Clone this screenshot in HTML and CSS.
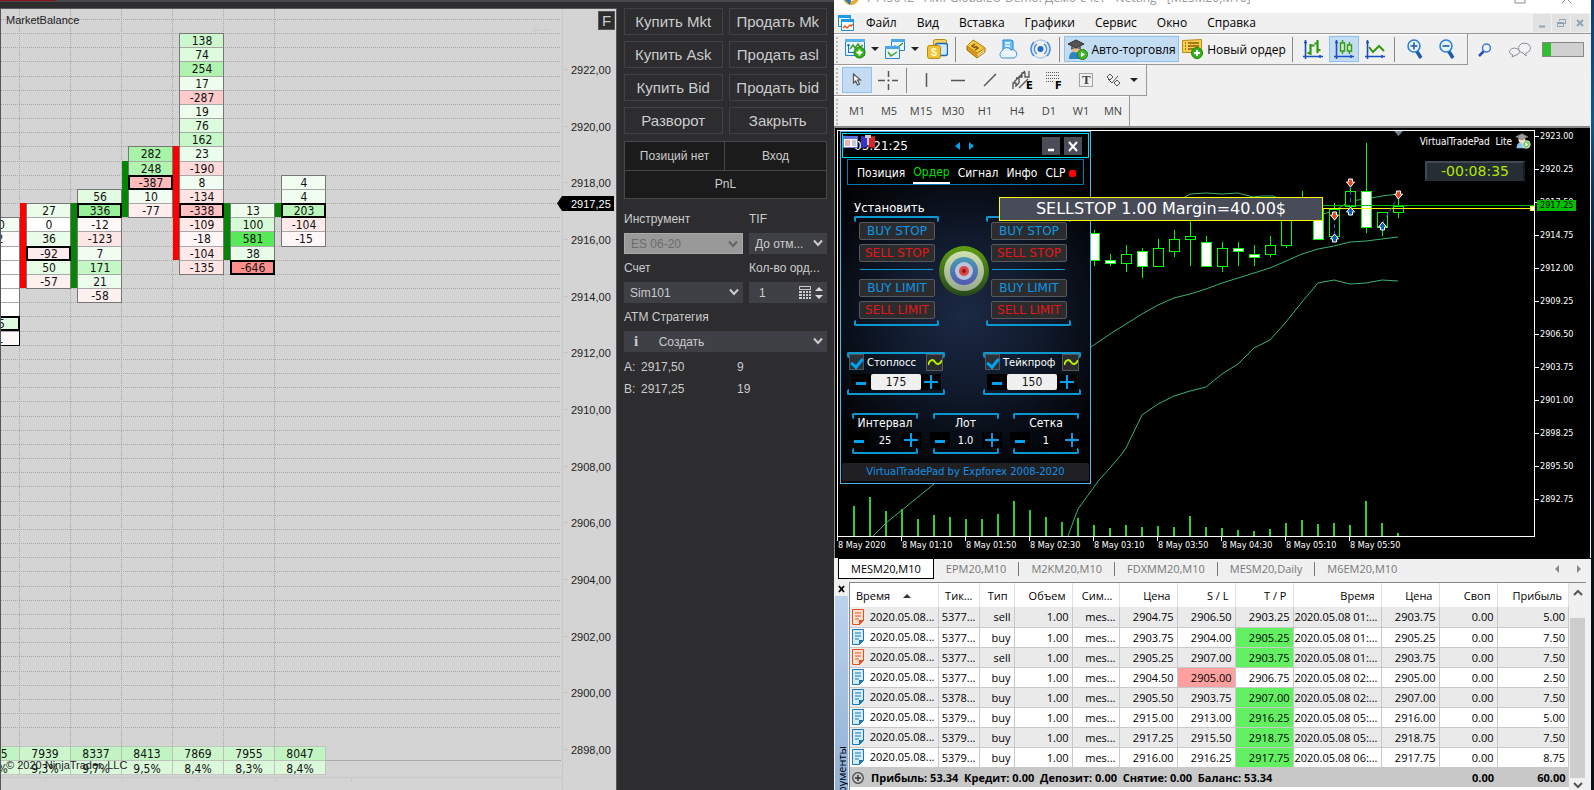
FILE: index.html
```html
<!DOCTYPE html>
<html lang="ru">
<head>
<meta charset="utf-8">
<title>MESM20,M10</title>
<link rel="stylesheet" href="styles.css">
</head>
<body>
<div class="workspace">

<section class="ninja">
  <div class="ninja-strip"><span class="ninja-strip-red"></span></div>
  <div class="ninja-main">
    <div class="foot">
      <div class="foot-plot"><svg id="footprint" class="fill"></svg>
        <span class="foot-title">MarketBalance</span>
        <span class="foot-copy">© 2020 NinjaTrader, LLC</span>
      </div>
      <div class="foot-axis"><svg id="footaxis" class="fill"></svg><button class="f-button">F</button></div>
    </div>
    <aside class="orders">
      <div class="order-buttons">
        <button>Купить Mkt</button><button>Продать Mk</button>
        <button>Купить Ask</button><button>Продать asl</button>
        <button>Купить Bid</button><button>Продать bid</button>
        <button>Разворот</button><button>Закрыть</button>
      </div>
      <div class="position">
        <div>Позиций нет</div><div>Вход</div><div class="pnl">PnL</div>
      </div>
      <div class="order-fields">
        <label for="instr">Инструмент</label><label for="tif">TIF</label>
        <div class="sel off"><select id="instr" disabled><option>ES 06-20</option></select><svg width="10" height="8" viewBox="0 0 10 8"><path d="M1 1.5 5 6 9 1.5"/></svg></div>
        <div class="sel"><select id="tif"><option>До отм...</option></select><svg width="10" height="8" viewBox="0 0 10 8"><path d="M1 1.5 5 6 9 1.5"/></svg></div>
        <label for="acc">Счет</label><label for="qty">Кол-во орд...</label>
        <div class="sel"><select id="acc"><option>Sim101</option></select><svg width="10" height="8" viewBox="0 0 10 8"><path d="M1 1.5 5 6 9 1.5"/></svg></div>
        <div class="sel qty"><input id="qty" type="text" value="1">
          <svg class="calc" width="24" height="14" viewBox="0 0 24 14"><path d="M.5 .5h11v3h-11z" fill="none" stroke="#ccc"/><path d="M0 5h3v2H0zM4 5h2v2H4zM7 5h2v2H7zM10 5h2v2h-2zM0 8h3v2H0zM4 8h2v2H4zM7 8h2v2H7zM10 8h2v2h-2zM0 11h3v2H0zM4 11h2v2H4zM7 11h2v2H7zM10 11h2v2h-2z" fill="#ccc"/><path d="M16 5l4-4 4 4zM16 9l4 4 4-4z" fill="#ddd"/></svg></div>
        <label class="wide" for="atm">ATM Стратегия</label>
        <div class="sel wide atm"><b>i</b><select id="atm"><option>Создать</option></select><svg width="10" height="8" viewBox="0 0 10 8"><path d="M1 1.5 5 6 9 1.5"/></svg></div>
      </div>
      <div class="quotes"><span>A:</span><span>2917,50</span><span>9</span><span>B:</span><span>2917,25</span><span>19</span></div>
    </aside>
  </div>
</section>

<section class="mt">
  <div class="mt-title">
    <svg width="18" height="18" viewBox="0 0 18 18"><circle cx="9" cy="9" r="8" fill="#e0b030"/><circle cx="9" cy="7" r="6" fill="#fff"/><path d="M2 11l6 6 1-5z" fill="#2d74c4"/></svg>
    <span>7445642 - AMPGlobalEU-Demo: Демо-счет - Netting - [MESM20,M10]</span>
    <svg class="winctl" width="66" height="14" viewBox="0 0 66 14"><path d="M5 3v8h10V3zM52 2l9 9M61 2l-9 9" fill="none" stroke="#888"/></svg>
  </div>
  <nav class="mt-menu">
    <svg width="18" height="18" viewBox="0 0 18 18"><path d="M1.500 1.500h12v11h-12z" fill="#fff" stroke="#1b8be0"/><path d="M1 1h13v3H1z" fill="#1b9bf0"/><path d="M4.500 5.500h12v11h-12z" fill="#fff" stroke="#1b8be0"/><path d="M4 5h13v3H4z" fill="#1b9bf0"/><path d="M6 14l2-2 2 2 3-3 1 1 2-2" fill="none" stroke="#e8541e" stroke-width="1.400"/></svg>
    <a href="#">Файл</a><a href="#">Вид</a><a href="#">Вставка</a><a href="#">Графики</a><a href="#">Сервис</a><a href="#">Окно</a><a href="#">Справка</a>
    <div class="mdi"><button aria-label="Свернуть"><svg width="12" height="12"><path d="M3 9.500h6" stroke="#8fa3b3" stroke-width="2"/></svg></button><button aria-label="Восстановить"><svg width="12" height="12"><path d="M4.500 4V2.500h6v4H9M2.500 5.500h6v4h-6zM2.500 6.500h6" fill="none" stroke="#8fa3b3"/></svg></button><button aria-label="Закрыть"><svg width="12" height="12"><path d="M3 3l6 6M9 3l-6 6" stroke="#8fa3b3" stroke-width="2"/></svg></button></div>
  </nav>

  <div class="bars-row">
    <div class="toolbar t1">
      <button class="w42" aria-label="Новый график"><svg width="21" height="20" viewBox="0 0 21 20"><path d="M.5 .5h19v16H.500z" fill="#e8f6ff" stroke="#2a83c7"/><path d="M0 0h20v3H0z" fill="#5ab4ec"/><path d="M3.500 14V5M2 7l1.500-2L5 7M3 13.500h7" fill="none" stroke="#1f6fb8"/><path d="M5 10l3-4 2 3 3-4 2 3 3-2" fill="none" stroke="#3a9a1c" stroke-width="1.400"/><circle cx="14.500" cy="13.500" r="5.500" fill="#34b21c" stroke="#1f7f10"/><path d="M14.500 10.500v6M11.500 13.500h6" stroke="#fff" stroke-width="2"/></svg><i class="caret"></i></button>
      <button class="w42" aria-label="Профили"><svg width="20" height="20" viewBox="0 0 20 20"><path d="M6.500 .5h13v11h-13z" fill="#eaf6ff" stroke="#2a83c7"/><path d="M6 0h14v3H6z" fill="#4aa6e6"/><path d="M9 7l4 1 5-4" fill="none" stroke="#3a9a1c" stroke-width="1.400"/><path d="M.5 7.500h14v12H.500z" fill="#eaf6ff" stroke="#2a83c7"/><path d="M0 7h15v3H0z" fill="#4aa6e6"/><path d="M3 13l3 4 3-2 3-2" fill="none" stroke="#3a9a1c" stroke-width="1.400"/></svg><i class="caret"></i></button>
      <button class="w30" aria-label="Символы"><svg width="21" height="20" viewBox="0 0 21 20"><rect x="6.500" y=".5" width="13" height="15" rx="2" fill="#f7d263" stroke="#b98a12"/><rect x="8.500" y="4.500" width="12" height="12" rx="2" fill="#cfe8ff" stroke="#1566c0" stroke-width="1.400"/><rect x=".5" y="6.500" width="13" height="13" rx="2" fill="#f1c12f" stroke="#b98a12"/><text x="4" y="17" class="ic-s">$</text></svg></button>
      <span class="sep"></span>
      <button class="w32" aria-label="Торговля"><svg width="22" height="20" viewBox="0 0 22 20"><path d="M8 1l12 8v4l-8 6L2 11V7z" fill="#d89a18" stroke="#9b6d08"/><path d="M8 1l12 8-8 5L2 7z" fill="#f4c840" stroke="#b98a12"/><path d="M10 5l-3 2 2 1.500 2-1 2 1.500-3 2" fill="none" stroke="#7a4e04" stroke-width="1.400"/><path d="M12.500 15.500l7-5M12.500 17.500l7-5" stroke="#fff3c0"/></svg></button>
      <button class="w32" aria-label="VPS"><svg width="20" height="20" viewBox="0 0 20 20"><path d="M5 1h8l2 1v12H5z" fill="#6cc2f7" stroke="#1788d8"/><path d="M7 4h5M7 7h5" stroke="#fff" stroke-width="1.500"/><path d="M4 19a4 4 0 0 1 0-7 5 5 0 0 1 9-1 4 4 0 0 1 3 8z" fill="#eaf5ff" stroke="#3c8fe0"/></svg></button>
      <button class="w32" aria-label="Сигналы"><svg width="21" height="20" viewBox="0 0 21 20" fill="none" stroke="#4a8ad8" stroke-width="1.300"><circle cx="10.500" cy="10" r="9" stroke="#a8c8ee"/><path d="M7 5a6 6 0 0 0 0 10M14 5a6 6 0 0 1 0 10M4 3a9.500 9.500 0 0 0 0 14M17 3a9.500 9.500 0 0 1 0 14"/><circle cx="10.500" cy="10" r="3" fill="#1f6ac8" stroke="none"/></svg></button>
      <span class="sep"></span>
      <button class="on auto"><svg width="21" height="21" viewBox="0 0 21 21"><path d="M2 20c0-6 3-8 7-8s6 2 6 8z" fill="#2f83c8"/><circle cx="9" cy="9" r="4.500" fill="#e9b98a"/><path d="M1 5l8-4 8 4-8 4z" fill="#555" stroke="#333"/><path d="M4 7v4c2-2 8-2 10 0V7l-5 3z" fill="#666"/><circle cx="15.500" cy="15.500" r="5" fill="#44b82a" stroke="#237a12"/><path d="M14 13v5l4-2.500z" fill="#fff"/></svg>Авто-торговля</button>
      <button class="neworder"><svg width="21" height="20" viewBox="0 0 21 20"><path d="M.5 1.500l19-1v13H.500z" fill="#f6cf50" stroke="#b98a12"/><path d="M3 4h1M6 4h11M3 7h1M6 7h11M3 10h1M6 10h7" stroke="#8a5c08" stroke-width="1.300"/><circle cx="15" cy="14" r="5.500" fill="#34b21c" stroke="#1f7f10"/><path d="M15 11v6M12 14h6" stroke="#fff" stroke-width="2"/></svg>Новый ордер</button>
      <span class="sep"></span>
      <button class="w32" aria-label="Бары"><svg width="20" height="20" viewBox="0 0 20 20"><path d="M2.500 1v19M0 17.500h20M1 3.500h3M17 16v3" stroke="#1a4fc0" stroke-width="1.600"/><path d="M7.500 5v11M4.500 14h3M7.500 6.500h4M14.500 1v13M11.500 4.500h3M14.500 11h3" stroke="#2f9a10" stroke-width="2.200"/></svg></button>
      <button class="w30 on" aria-label="Свечи"><svg width="20" height="20" viewBox="0 0 20 20"><path d="M2.500 1v19M0 17.500h20M1 3.500h3M17 16v3" stroke="#1a4fc0" stroke-width="1.600"/><path d="M8.500 1v14M15.500 3v12" stroke="#2f9a10" stroke-width="1.400"/><path d="M6.500 4h4v8h-4zM13.500 6h4v6h-4z" fill="#d4f0c8" stroke="#2f9a10" stroke-width="1.400"/></svg></button>
      <button class="w32" aria-label="Линия"><svg width="20" height="20" viewBox="0 0 20 20"><path d="M2.500 1v19M0 17.500h20M1 3.500h3M17 16v3" stroke="#1a4fc0" stroke-width="1.600"/><path d="M4 8l4 5 6-6 5 5" fill="none" stroke="#2f9a10" stroke-width="2"/></svg></button>
      <span class="sep"></span>
      <button class="w32" aria-label="Увеличить"><svg width="17" height="20" viewBox="0 0 17 20"><path d="M9 11l5 8" stroke="#1f58b0" stroke-width="3.500"/><circle cx="7" cy="7" r="6" fill="#e4f4ff" stroke="#2f80d0" stroke-width="1.600"/><path d="M7 3.500v7M3.500 7h7" stroke="#1f58b0" stroke-width="1.600"/></svg></button>
      <button class="w32" aria-label="Уменьшить"><svg width="17" height="20" viewBox="0 0 17 20"><path d="M9 11l5 8" stroke="#1f58b0" stroke-width="3.500"/><circle cx="7" cy="7" r="6" fill="#e4f4ff" stroke="#2f80d0" stroke-width="1.600"/><path d="M3.500 7h7" stroke="#1f58b0" stroke-width="1.600"/></svg></button>
    </div>
    <div class="tray">
      <svg width="14" height="14" viewBox="0 0 14 14"><path d="M6 8l-5 5" stroke="#2450b8" stroke-width="2.500"/><circle cx="8.500" cy="5" r="4" fill="#eef4ff" stroke="#3a78d8" stroke-width="1.500"/></svg>
      <svg width="22" height="16" viewBox="0 0 22 16" fill="#f2f2f6" stroke="#8c8c96"><path d="M14 11l3 3v-3a6 5 0 1 0-3 0z"/><path d="M4 13l-1 2 4-2a5 3.500 0 1 0-3 0z"/></svg>
      <progress max="100" value="20"></progress>
    </div>
  </div>

  <div class="toolbar t2">
    <button class="w30 on" aria-label="Курсор"><svg width="10" height="14" viewBox="0 0 10 14"><path d="M1.500 1v9l2.200-2 1.800 4 2-1-2-4h3z" fill="#fff" stroke="#555" stroke-width="1.200"/></svg></button>
    <button class="w32" aria-label="Перекрестие"><svg width="20" height="20"><path d="M10.500 1v6M10.500 9.500v2M10.500 14v6M0 10.500h7M9.500 10.500h2M14 10.500h6" stroke="#555" stroke-width="1.500"/></svg></button>
    <span class="sep"></span>
    <button class="w32" aria-label="Вертикаль"><svg width="14" height="14"><path d="M7.500 0v14" stroke="#555" stroke-width="1.500"/></svg></button>
    <button class="w32" aria-label="Горизонталь"><svg width="14" height="14"><path d="M0 7.500h14" stroke="#555" stroke-width="1.500"/></svg></button>
    <button class="w32" aria-label="Линия"><svg width="14" height="14"><path d="M1 13L13 1" stroke="#555" stroke-width="1.500"/></svg></button>
    <button class="w32" aria-label="Канал"><svg width="21" height="20"><path d="M1 19v-6h3v3l3-3V7h3V3h3v4h4V1M2 12L13 1M7 18l9-9M4 8h3" fill="none" stroke="#555" stroke-width="1.300"/><text x="14" y="19" class="ic-b">E</text></svg></button>
    <button class="w32" aria-label="Фибоначчи"><svg width="17" height="20"><path d="M0 2.500h14M0 5.500h14M0 8.500h14M0 11.500h8" stroke="#555" stroke-dasharray="1 1"/><text x="9" y="19" class="ic-b">F</text></svg></button>
    <button class="w32" aria-label="Текст"><svg width="16" height="16"><path d="M1.500 1.500h13v13h-13z" fill="none" stroke="#555" stroke-dasharray="1 1"/><text x="4" y="12" class="ic-t">T</text></svg></button>
    <button class="w42" aria-label="Фигуры"><svg width="15" height="15" fill="none" stroke="#555"><path d="M4 1l3 3-3 3-3-3zM2 6l4 4L12 3M11 7l3 3-3 3-3-3z"/></svg><i class="caret"></i></button>
  </div>
  <div class="toolbar t3">
    <button>M1</button><button>M5</button><button>M15</button><button>M30</button><button>H1</button><button>H4</button><button>D1</button><button>W1</button><button>MN</button>
  </div>

  <div class="chart">
    <div class="chart-top">
      <div class="plot">
        <svg id="candles" class="fill"></svg>
        <div class="expert">VirtualTradePad&nbsp; Lite <svg width="16" height="16" viewBox="0 0 21 21"><path d="M2 20c0-6 3-8 7-8s6 2 6 8z" fill="#8cc4ee"/><circle cx="9" cy="9" r="4.500" fill="#f3dcc4"/><path d="M1 5l8-4 8 4-8 4z" fill="#999" stroke="#777"/><circle cx="15" cy="15" r="5" fill="#7cc86c" stroke="#e8ffe8"/><path d="M13.500 12.500v5l4-2.500z" fill="#fff"/></svg></div>
        <div class="timer">-00:08:35</div>

        <div class="pad">
          <header class="pad-head">
            <svg class="pad-icons" width="34" height="14" viewBox="0 0 34 14"><path d="M.5 1.500h14v11H.500z" fill="#fff" stroke="#6a7ad8"/><path d="M0 1h15v3H0z" fill="#5a6ee0"/><path d="M2 6h5M2 8h5M2 10h5" stroke="#e06060"/><path d="M9 6h4M9 8h4M9 10h4" stroke="#9090c0"/><path d="M18 1l7 1v10l-7 1z" fill="#3434c8"/><path d="M25 2l7-1v12l-7-1z" fill="#d42828"/><path d="M22 0h6v3h-2v7h-2V3h-2z" fill="#ccc"/></svg>
            <span class="clock">05:21:25</span>
            <svg class="arrows" width="20" height="8"><path d="M5 0v8L0 4zM14 0v8l5-4z" fill="#00a2f2"/></svg>
            <button aria-label="Свернуть"><svg width="16" height="16"><path d="M5 12h6" stroke="#fff" stroke-width="2.500"/></svg></button>
            <button aria-label="Закрыть"><svg width="16" height="16"><path d="M4 4l8 9M12 4l-8 9" stroke="#fff" stroke-width="2"/></svg></button>
          </header>
          <nav class="pad-nav"><a href="#">Позиция</a><a href="#" class="cur">Ордер</a><a href="#">Сигнал</a><a href="#">Инфо</a><a href="#">CLP</a><i></i></nav>
          <h2>Установить</h2>
          <div class="pad-orders">
            <div class="frame"><button class="buy">BUY STOP</button><button class="sell">SELL STOP</button><hr><button class="buy">BUY LIMIT</button><button class="sell">SELL LIMIT</button></div>
            <svg class="target" width="50" height="50" viewBox="0 0 50 50"><defs><linearGradient id="tg" x2="0" y2="1"><stop offset="0" stop-color="#5f9e12"/><stop offset="1" stop-color="#27481a"/></linearGradient><linearGradient id="tb" x2="0" y2="1"><stop offset="0" stop-color="#4a9ab4"/><stop offset="1" stop-color="#5058b0"/></linearGradient><linearGradient id="tw" x2="0" y2="1"><stop offset="0" stop-color="#cfe0b0"/><stop offset="1" stop-color="#98a890"/></linearGradient></defs><circle cx="25" cy="25" r="25" fill="url(#tg)"/><circle cx="25" cy="25" r="20" fill="url(#tw)"/><circle cx="25" cy="25" r="14" fill="url(#tb)"/><circle cx="25" cy="25" r="9" fill="#b8c4d8"/><circle cx="25" cy="25" r="5" fill="#e04444"/><circle cx="25" cy="25" r="2" fill="#901818"/></svg>
            <div class="frame"><button class="buy">BUY STOP</button><button class="sell">SELL STOP</button><hr><button class="buy">BUY LIMIT</button><button class="sell">SELL LIMIT</button></div>
          </div>
          <div class="pad-stops">
            <div class="frame">
              <div class="stop-head"><input type="checkbox" id="sl" checked><label for="sl">Стоплосс</label><button aria-label="Кривая"><svg width="14" height="14"><path d="M0 10c2-6 5-6 7-3s5 3 7-2" fill="none" stroke="#b8f000" stroke-width="2"/></svg></button></div>
              <div class="spin"><button aria-label="Меньше"><i class="minus"></i></button><input type="text" value="175" aria-label="Стоплосс"><button aria-label="Больше"><i class="plus"></i></button></div>
            </div>
            <div class="frame">
              <div class="stop-head"><input type="checkbox" id="tp" checked><label for="tp">Тейкпроф</label><button aria-label="Кривая"><svg width="14" height="14"><path d="M0 10c2-6 5-6 7-3s5 3 7-2" fill="none" stroke="#b8f000" stroke-width="2"/></svg></button></div>
              <div class="spin"><button aria-label="Меньше"><i class="minus"></i></button><input type="text" value="150" aria-label="Тейкпроф"><button aria-label="Больше"><i class="plus"></i></button></div>
            </div>
          </div>
          <div class="pad-params">
            <div class="frame"><label for="p1">Интервал</label><div class="spin dark"><button aria-label="Меньше"><i class="minus"></i></button><input id="p1" type="text" value="25"><button aria-label="Больше"><i class="plus"></i></button></div></div>
            <div class="frame"><label for="p2">Лот</label><div class="spin dark"><button aria-label="Меньше"><i class="minus"></i></button><input id="p2" type="text" value="1.0"><button aria-label="Больше"><i class="plus"></i></button></div></div>
            <div class="frame"><label for="p3">Сетка</label><div class="spin dark"><button aria-label="Меньше"><i class="minus"></i></button><input id="p3" type="text" value="1"><button aria-label="Больше"><i class="plus"></i></button></div></div>
          </div>
          <footer>VirtualTradePad by Expforex 2008-2020</footer>
        </div>
        <div class="tip">SELLSTOP 1.00 Margin=40.00$</div>
      </div>
      <div class="price-axis"><span>2923.00</span><span>2920.25</span><span>2917.50</span><span>2914.75</span><span>2912.00</span><span>2909.25</span><span>2906.50</span><span>2903.75</span><span>2901.00</span><span>2898.25</span><span>2895.50</span><span>2892.75</span><b>2917.25</b></div>
    </div>
    <div class="time-axis"><span>8 May 2020</span><span>8 May 01:10</span><span>8 May 01:50</span><span>8 May 02:30</span><span>8 May 03:10</span><span>8 May 03:50</span><span>8 May 04:30</span><span>8 May 05:10</span><span>8 May 05:50</span></div>
  </div>

  <div class="tabs"><button class="cur">MESM20,M10</button><button>EPM20,M10</button><button>M2KM20,M10</button><button>FDXMM20,M10</button><button>MESM20,Daily</button><button>M6EM20,M10</button>
    <svg width="30" height="10"><path d="M6 1v8L2 5zM24 1v8l4-4z" fill="#888"/></svg></div>

  <div class="toolbox">
    <div class="side"><button aria-label="Закрыть"><svg width="8" height="8"><path d="M1 1l5 6M6 1L1 7" stroke="#000" stroke-width="1.800"/></svg></button><div class="side-bar"><span>Инструменты</span></div></div>
    <div class="tbl">
      <table>
        <colgroup><col class="c88"><col class="c41"><col class="c35"><col class="c58"><col class="c47"><col class="c58"><col class="c58"><col class="c58"><col class="c88"><col class="c58"><col class="c58"><col></colgroup>
        <thead><tr><th class="l">Время <i class="up"></i></th><th>Тик...</th><th>Тип</th><th>Объем</th><th>Сим...</th><th>Цена</th><th>S / L</th><th>T / P</th><th>Время</th><th>Цена</th><th>Своп</th><th>Прибыль</th></tr></thead>
        <tbody id="deals"></tbody>
        <tfoot><tr><td colspan="9" class="l"><svg width="12" height="12" viewBox="0 0 12 12"><circle cx="6" cy="6" r="5.300" fill="none" stroke="#444" stroke-width="1.200"/><path d="M6 3v6M3 6h6" stroke="#333" stroke-width="1.400"/></svg>Прибыль: 53.34&nbsp; Кредит: 0.00&nbsp; Депозит: 0.00&nbsp; Снятие: 0.00&nbsp; Баланс: 53.34</td><td></td><td>0.00</td><td>60.00</td></tr></tfoot>
      </table>
      <div class="scroll"><svg width="10" height="7"><path d="M1 6l4-4 4 4" fill="none" stroke="#555" stroke-width="2"/></svg><i></i><svg width="10" height="7"><path d="M1 1l4 4 4-4" fill="none" stroke="#555" stroke-width="2"/></svg></div>
    </div>
  </div>
</section>
<div class="desktop"></div>
</div>
<script src="app.js"></script>
</body>
</html>
```
FILE: styles.css
```css
* { box-sizing: border-box; }
body { margin: 0; background: #2d2d30; font-family: "Open Sans", sans-serif; overflow: hidden; }
button, input, select { font: inherit; color: inherit; margin: 0; padding: 0; border: 0; background: none; border-radius: 0; }
a { color: inherit; text-decoration: none; }
.fill { display: block; width: 100%; height: 100%; }
.workspace { display: flex; height: 100vh; }

/* footprint chart */
.ninja { flex: 834 1 0; min-width: 0; display: flex; flex-direction: column; background: #2d2d30; font-family: "Liberation Sans", sans-serif; }
.ninja-strip { height: 8px; border-top: 2px solid #4a4a4e; position: relative; }
.ninja-strip-red { position: absolute; top: -2px; left: 0; width: 56px; height: 1px; background: #8c1420; }
.ninja-main { flex: 1; display: flex; min-height: 0; }
.foot { flex: 1; display: flex; min-width: 0; background: #d4d4d4; border: 1px solid #55555a; border-bottom: 0; }
.foot-plot { flex: 1; min-width: 0; position: relative; }
.foot-axis { width: 54px; position: relative; border-left: 1px solid #c8c8c8; }
.foot-title { position: absolute; left: 5px; top: 5px; font-size: 11px; line-height: 13px; color: #222; }
.foot-copy { position: absolute; left: 5px; bottom: 18px; font-size: 11px; line-height: 14px; color: #222; }
.f-button { position: absolute; top: 2px; right: 1px; width: 17px; height: 19px; background: #2d2d30; color: #ccc; font-size: 15px; line-height: 17px; border: 1px solid #555; }
.cell { font: 12px "DejaVu Sans Condensed", sans-serif; text-anchor: middle; fill: #111; }
.tick { font: 11px "Liberation Sans", sans-serif; fill: #222; }
.tick.now { fill: #fff; }

/* order entry */
.orders { width: 217px; padding: 0 7px 0 7px; color: #ccc; font-size: 12px; }
.order-buttons { display: grid; grid-template-columns: 1fr 1fr; gap: 6px; }
.order-buttons button { height: 27px; border: 1px solid #414145; font-size: 15px; white-space: nowrap; overflow: hidden; }
.position { display: grid; grid-template-columns: 99px 1fr; gap: 1px; margin-top: 7px; background: #47474b; border: 1px solid #47474b; text-align: center; line-height: 28px; }
.position div { background: #1b1b1b; }
.position .pnl { grid-column: span 2; line-height: 27px; }
.order-fields { display: grid; grid-template-columns: 119px 1fr; column-gap: 6px; margin-top: 6px; }
.order-fields label { line-height: 28px; white-space: nowrap; }
.sel { position: relative; height: 21px; background: #3f3f46; display: flex; align-items: center; }
.sel select { appearance: none; width: 100%; height: 21px; padding: 0 6px; font-size: 12px; opacity: 1; }
.sel > svg { position: absolute; right: 4px; top: 6px; fill: none; stroke: #ccc; stroke-width: 2; }
.sel.off { background: #999; color: #6c6c6c; border: 1px solid #aaa; }
.sel.off > svg { stroke: #666; }
.sel input { width: 50px; padding-left: 10px; }
.sel > .calc { top: 4px; stroke-width: 1; stroke: none; }
.wide { grid-column: span 2; }
.atm b { padding-left: 10px; width: 32px; font-family: "Liberation Serif", serif; font-size: 15px; }
.quotes { display: grid; grid-template-columns: 17px 96px 1fr; margin-top: 4px; line-height: 22px; }

/* terminal frame */
.mt { flex: 757 1 0; min-width: 0; display: flex; flex-direction: column; background: #f0f0f0; color: #000; }
.desktop { width: 3px; background: linear-gradient(#0a3f78 0, #0a5a94 120px, #0b3054 200px, #0a0f18 300px, #0a0f18); }
.mt-title { height: 13px; background: #fff; color: #999; font-size: 12px; line-height: 16px; display: flex; gap: 6px; padding-left: 8px; align-items: flex-end; white-space: nowrap; overflow: hidden; }
.mt-title > * { flex: none; margin-bottom: 7px; }
.mt-title .winctl { margin-left: auto; margin-right: 15px; }
.mt-menu { height: 20px; display: flex; align-items: center; font-size: 12px; padding-left: 3px; }
.mt-menu svg { flex: none; }
.mt-menu > svg { margin-right: 11px; }
.mt-menu a { padding-right: 20px; white-space: nowrap; line-height: 18px; }
.mdi { margin-left: auto; display: flex; gap: 1px; padding-right: 2px; }
.mdi button { width: 18px; height: 18px; background: #e2e2e2; display: grid; place-items: center; }
.bars-row { display: flex; justify-content: space-between; border-top: 1px solid #999; }
.toolbar { display: flex; align-items: center; align-self: flex-start; padding: 2px 4px 2px 8px; border-right: 1px solid #999; border-bottom: 1px solid #999; box-shadow: inset 0 1px #fff; height: 31px; white-space: nowrap; background: radial-gradient(circle, #bbb 1px, transparent 1px) 1px 2px / 4px 4px repeat-y; }
.toolbar button { height: 26px; display: flex; align-items: center; justify-content: center; font-size: 12px; flex: none; }
.toolbar .on { background: #c3dcf2; box-shadow: inset 0 0 0 1px #8fc3ee; }
.toolbar svg { flex: none; }
.w30 { width: 30px; } .w32 { width: 32px; } .toolbar .w42 { width: 40px; justify-content: space-around; }
.t2 .sep { margin: 0 3px 0 2px; }
.sep { width: 1px; height: 25px; background: #888; margin: 0 2px; }
.t1 .sep { margin: 0 4px 0 3px; }
.caret { border: 4px solid transparent; border-top-color: #222; border-bottom: 0; }
.toolbar .auto { width: 115px; gap: 3px; }
.toolbar .neworder { width: 110px; gap: 4px; }
.t3 { border-bottom: 0; height: 30px; }
.toolbar.t3 button { width: 32px; font-size: 11px; color: #444; }
.toolbar.t3 { padding: 2px 0 4px 7px; }
.ic-s { font: bold 11px "Liberation Sans", sans-serif; fill: #fff8d0; }
.ic-b { font: bold 10px "DejaVu Sans", sans-serif; fill: #000; }
.ic-t { font: bold 13px "Liberation Serif", serif; fill: #444; }
.tray { display: flex; align-items: center; gap: 17px; padding-right: 7px; }
.tray progress { appearance: none; width: 42px; height: 15px; margin-left: -6px; border: 1px solid #888; background: #d0d0d0; }
.tray progress::-webkit-progress-bar { background: #d0d0d0; }
.tray progress::-webkit-progress-value { background: #2fbf2f; }

/* price chart */
.chart { flex: 1; min-height: 0; margin-right: 1px; padding: 2px 0 0 2px; background: #000; border-top: 2px solid #888; border-left: 1px solid #888; display: flex; flex-direction: column; font-family: "DejaVu Sans Condensed", sans-serif; color: #fff; }
.chart-top { flex: 1; min-height: 0; display: flex; }
.plot { flex: 1; min-width: 0; position: relative; border: 1px solid #fff; }
.price-axis { width: 55px; position: relative; font-size: 9px; line-height: 11px; }
.price-axis span { display: flex; align-items: center; height: 33px; }
.price-axis span:first-child { margin-top: -10px; }
.price-axis span::before { content: ""; width: 4px; height: 1px; background: #fff; margin-right: 1px; }
.price-axis b { position: absolute; left: 2px; top: 70px; width: 39px; padding-left: 3px; background: #00c000; color: #000; font-weight: normal; }
.time-axis { display: flex; height: 21px; font-size: 9px; line-height: 11px; }
.time-axis span { width: 64px; white-space: nowrap; padding: 3px 0 0 1px; background: linear-gradient(#fff, #fff) 0 0 / 1px 4px no-repeat; }
.expert { position: absolute; right: 3px; top: 2px; display: flex; align-items: center; gap: 3px; font: 10px "DejaVu Sans Condensed", sans-serif; }
.timer { position: absolute; right: 9px; top: 30px; width: 100px; height: 20px; background: #242e34; border: 2px solid #3e4a52; border-right-color: #141c22; border-bottom-color: #242e34; color: #b4e600; font: 14px/17px "DejaVu Sans", sans-serif; text-align: center; }
.tip { position: absolute; left: 161px; top: 66px; width: 324px; height: 24px; background: #484b58; border: 1px solid #ffff00; font: 16px/22px "DejaVu Sans", sans-serif; text-align: center; white-space: nowrap; }

/* trade pad */
.pad { position: absolute; left: 2px; top: 0; width: 251px; border: 1px solid #4db8f0; background: radial-gradient(circle at 50% 52%, #1c2944 0, #101a2c 35%, #000 78%); font-size: 12px; padding: 1px 1px 2px; }
.pad-head { display: flex; align-items: center; gap: 4px; height: 25px; border: 1px solid #00e0f0; background: #000; padding-right: 6px; position: relative; }
.pad-icons { position: absolute; left: 0; top: 1px; }
.clock { font: 12px "DejaVu Sans", sans-serif; padding-left: 11px; margin-right: 43px; }
.arrows { margin-right: auto; }
.pad-head button { width: 18px; height: 18px; background: #4a4c58; display: grid; place-items: center; }
.pad-nav { display: flex; align-items: center; gap: 8px; margin: 1px 5px 0; height: 26px; border: 1px solid #0078b4; background: #000; padding: 2px 0 0 9px; white-space: nowrap; font-size: 12px; }
.pad-nav .cur { color: #00e000; line-height: 20px; border-bottom: 2px solid #fff; }
.pad-nav a:not(.cur) { line-height: 22px; }
.pad-nav i { width: 7px; height: 7px; border-radius: 2px; background: #f00; margin-left: -5px; }
.pad h2 { margin: 14px 0 0 12px; font-size: 13px; line-height: 17px; font-weight: normal; }
.frame::before, .frame::after { content: ""; display: block; height: 4px; border: 2px solid #0b98d0; border-bottom: 0; border-radius: 2px; }
.frame::after { border: 2px solid #0b98d0; border-top: 0; }
.pad-orders { display: flex; align-items: center; justify-content: space-between; padding: 0 18px 0 12px; }
.pad-orders .frame { width: 85px; display: flex; flex-direction: column; gap: 4px; }
.pad-orders button { height: 18px; margin: 0 4px 0 5px; background: #2c2c2e; border: 1px solid #56585c; border-radius: 2px; font-size: 12px; font-family: "DejaVu Sans", sans-serif; white-space: nowrap; line-height: 14px; }
.pad-orders .frame::before { margin-bottom: -4px; }
.pad-orders .frame::after { margin-top: -3px; }
.pad-orders hr { width: 73px; margin: 3px 0 5px 6px; border: 0; border-top: 1px solid #0b98d0; }
.buy { color: #0c98e8; } .sell { color: #e01818; }
.target { margin: 0 -13px 0 -11px; flex: none; }
.pad-stops { display: flex; justify-content: space-between; padding: 0 8px 0 5px; margin-top: 26px; }
.pad-stops .frame { width: 98px; }
.stop-head { display: flex; align-items: center; gap: 3px; height: 16px; margin: -4px 2px 0; font-size: 10px; font-family: "DejaVu Sans", sans-serif; white-space: nowrap; }
.stop-head label { flex: 1; }
.stop-head input { appearance: none; width: 15px; height: 16px; background: #2c3038; border: 1px solid #50545c; display: grid; place-items: center; }
.stop-head input::before { content: ""; width: 5px; height: 9px; border: solid #00a2f2; border-width: 0 3px 3px 0; transform: rotate(40deg); }
.stop-head button { width: 17px; height: 17px; background: #2c2c2e; border: 1px solid #56585c; display: grid; place-items: center; }
.spin { display: flex; align-items: center; height: 18px; margin: 3px 4px -2px; }
.spin input { flex: 1; min-width: 0; width: 20px; height: 16px; background: #f0f0f0; color: #111; text-align: center; border-radius: 2px; font-size: 12px; font-family: "DejaVu Sans Condensed", sans-serif; }
.spin button { width: 20px; height: 16px; background: #000; display: grid; place-items: center; }
.spin.dark input { background: none; color: #fff; font-size: 11px; }
.spin.dark { margin: 1px -3px -1px; }
.minus { width: 10px; height: 3px; margin-top: 2px; background: #00a2f2; }
.plus { width: 14px; height: 14px; background: linear-gradient(#00a2f2, #00a2f2) 50% 50% / 14px 2px no-repeat, linear-gradient(#00a2f2, #00a2f2) 50% 50% / 2px 14px no-repeat; }
.pad-params { display: flex; justify-content: space-between; padding: 0 10px 0 10px; margin-top: 18px; }
.pad-params .frame { width: 66px; text-align: center; }
.pad-params label { display: block; line-height: 14px; margin-top: -3px; }
.pad footer { margin-top: 9px; height: 18px; background: #202022; border-radius: 2px; color: #1490e8; text-align: center; font: 10px/18px "DejaVu Sans", sans-serif; }

/* chart tabs */
.tabs { display: flex; height: 22px; border-top: 1px solid #000; margin-left: 4px; align-items: flex-start; font-size: 11px; color: #777; }
.tabs button { height: 18px; padding: 0 12px; line-height: 16px; white-space: nowrap; }
.tabs .cur { background: #fff; color: #000; border: solid #000; border-width: 0 1px 1px; height: 20px; line-height: 18px; }
.tabs button:not(.cur):not(:nth-child(2)) { border-left: 1px solid #777; height: 14px; line-height: 14px; margin-top: 3px; }
.tabs button:nth-child(2) { padding-top: 2px; }
.tabs svg { margin: 5px 8px 0 auto; }

/* trade history */
.toolbox { display: flex; height: 210px; flex: none; padding-top: 2px; font-size: 11px; }
.side { width: 15px; display: flex; flex-direction: column; }
.side button { height: 14px; display: grid; place-items: center; }
.side-bar { flex: 1; min-height: 0; width: 13px; margin-left: 1px; padding-top: 150px; background: linear-gradient(#bcd3ec, #8fb0d6); overflow: hidden; }
.side-bar span { writing-mode: vertical-rl; transform: rotate(180deg); font-size: 11px; line-height: 13px; }
.tbl { flex: 1; min-width: 0; display: flex; border-top: 1px solid #888; border-left: 1px solid #888; background: #fff; margin-right: 5px; align-items: flex-start; }
table { flex: 1; min-width: 0; table-layout: fixed; border-collapse: collapse; width: 100%; }
.c88 { width: 88px; } .c41 { width: 41px; } .c35 { width: 35px; } .c58 { width: 58px; } .c47 { width: 47px; }
th { font-weight: normal; height: 24px; text-align: right; padding: 0 6px 0 0; border-right: 1px solid #e0e0e0; white-space: nowrap; }
th.l { text-align: left; padding-left: 6px; }
.up { display: inline-block; border: 4px solid transparent; border-bottom-color: #333; border-top: 0; margin: 0 0 2px 10px; }
td { height: 20px; padding: 0 3px 0 0; text-align: right; border-right: 1px solid #c8c8c8; border-bottom: 1px solid #c8c8c8; white-space: nowrap; overflow: hidden; line-height: 15px; }
tbody tr:nth-child(odd) { background: #eaeaea; }
td .doc { float: left; margin-left: 2px; }
td.good { background: #62f062; } td.bad { background: #ffa0a0; }
tfoot td { background: #c8c8c8; font-weight: bold; border: 0; }
tfoot .l { text-align: left; }
tfoot svg { margin: 0 7px 0 2px; vertical-align: -2px; }
.scroll { width: 17px; align-self: stretch; background: #f0f0f0; display: flex; flex-direction: column; align-items: center; padding: 6px 0 0; gap: 22px; }
.scroll i { flex: 1; width: 15px; background: #cdcdcd; }
.scroll svg { flex: none; }
.scroll svg:last-child { margin: -18px 0 1px; }
```
FILE: app.js
```js
var NS = 'http://www.w3.org/2000/svg';
function add(parent, tag, attrs, text) {
  var el = document.createElementNS(NS, tag);
  for (var k in attrs) el.setAttribute(k, attrs[k]);
  if (text !== undefined) el.textContent = text;
  parent.appendChild(el);
  return el;
}

/* footprint */
var fp = document.getElementById('footprint');
var W = 561, ROW = 85 / 6;
function rowY(k) { return Math.round(24 + k * ROW); }
for (var k = -1; k < 50; k++) {
  add(fp, 'path', { d: 'M0 ' + (rowY(k) + .5) + 'H' + (W - 1), stroke: '#a8a8a8', 'stroke-dasharray': '1 1' });
}
for (var c = 0; c < 6; c++) {
  add(fp, 'path', { d: 'M' + (18.5 + c * 51) + ' 0V738', stroke: '#a8a8a8', 'stroke-dasharray': '1 1' });
}
function shade(v) {
  if (v === null || v === 0) return '#fff';
  var m = Math.abs(v), a = v > 0 ? .05 + m * .00105 : .02 + m * .00065;
  var o = Math.round(255 * (1 - a));
  return v > 0 ? 'rgb(' + o + ',' + Math.round(255 - 34 * a) + ',' + o + ')' : 'rgb(255,' + o + ',' + o + ')';
}
function column(x, first, values, strong) {
  var y0 = rowY(first), y1 = rowY(first + values.length);
  values.forEach(function (v, i) {
    var y = rowY(first + i), h = rowY(first + i + 1) - y;
    add(fp, 'rect', { x: x + .5, y: y + .5, width: 44, height: h, fill: shade(v), stroke: '#a8a8a8' });
    if (v !== null) add(fp, 'text', { x: x + 23, y: y + 12, 'class': 'cell' }, v);
  });
  add(fp, 'rect', { x: x + .5, y: y0 + .5, width: 44, height: y1 - y0, fill: 'none', stroke: '#777' });
  var s = rowY(first + strong);
  add(fp, 'rect', { x: x + 1, y: s + 1, width: 43, height: 13, fill: 'none', stroke: '#000', 'stroke-width': 2 });
}
function range(x, from, to, color) {
  add(fp, 'rect', { x: x, y: rowY(from), width: 6, height: rowY(to) - rowY(from), fill: color });
}
column(-26, 13, [10, -2, null, null, null, null, null, 65, -1], 7);
add(fp, 'path', { d: 'M18.5 317V336.5H0', fill: 'none', stroke: '#000' });
column(25, 12, [27, 0, 36, -92, 50, -57], 3);
column(76, 11, [56, 336, -12, -123, 7, 171, 21, -58], 1);
column(127, 8, [282, 248, -387, 10, -77], 2);
column(178, 0, [138, 74, 254, 17, -287, 19, 76, 162, 23, -190, 8, -134, -338, -109, -18, -104, -135], 12);
column(229, 12, [13, 100, 581, 38, -646], 4);
column(280, 10, [4, 4, 203, -104, -15], 2);
range(19, 12, 18, '#f00');
range(70, 12, 18, '#068406');
range(121, 9, 13, '#068406');
range(172, 8, 16, '#f00');
range(223, 12, 16, '#068406');
range(274, 12, 13, '#068406');

add(fp, 'path', { d: 'M325 751.5H' + (W - 1), stroke: '#aaa' });
add(fp, 'path', { d: 'M0 768.5H' + W + 'M44.5 768v5M121.5 768v5M197.5 768v5M274.5 768v5M350.5 768v5', stroke: '#c8c8c8', fill: 'none' });
add(fp, 'path', { d: 'M532 21H549M532 21l5-4M532 21l5 4', stroke: '#c8c8c8', fill: 'none' });
[['7925', '9,4%'], ['7939', '9,3%'], ['8337', '9,7%'], ['8413', '9,5%'], ['7869', '8,4%'], ['7955', '8,3%'], ['8047', '8,4%']].forEach(function (t, i) {
  var x = -33 + i * 51;
  var deep = i % 2 === 0 && i !== 4 || i === 3;
  add(fp, 'rect', { x: x + .5, y: 737.5, width: 51, height: 14, fill: deep ? '#c2f3c2' : '#ccf5cc', stroke: '#a8a8a8', 'stroke-dasharray': '1 1' });
  add(fp, 'rect', { x: x + .5, y: 751.5, width: 51, height: 14, fill: '#dbf8db', stroke: '#a8a8a8', 'stroke-dasharray': '1 1' });
  add(fp, 'text', { x: x + 26, y: 749, 'class': 'cell' }, t[0]);
  add(fp, 'text', { x: x + 26, y: 764, 'class': 'cell' }, t[1]);
});

var ax = document.getElementById('footaxis');
for (var n = 0; n < 13; n++) {
  var y = Math.round(61 + n * 170 / 3);
  add(ax, 'path', { d: 'M0 ' + (y - .5) + 'h5', stroke: '#c4c4c4' });
  add(ax, 'text', { x: 8, y: y + 4, 'class': 'tick' }, (2922 - 2 * n) + ',00');
}
ax.style.overflow = 'visible';
add(ax, 'path', { d: 'M-6 194.5L-1 187H51V202H-1z', fill: '#000' });
add(ax, 'text', { x: 8, y: 199, 'class': 'tick now' }, '2917,25');

/* candles: high, body top, body bottom, low, filled */
var cs = document.getElementById('candles');
function py(p) { return Math.round(6 + (2923 - p) * 12.02); }
function cx(i) { return 16 + 16 * i; }
[78, 51, 93, 87, 117, 105, 111, 117, 117, 102, 63, 90, 111, 126, 114, 135, 144, 135, 141, 138, 141, 108, 141, 144, 150, 153, 147, 129, 120, 132, 129, 135, 63, 129, 159].forEach(function (v, i) {
  var h = Math.round((168 - v) / 3);
  add(cs, 'rect', { x: cx(i) - 1, y: 405 - h, width: 2, height: h, fill: '#32cd32' });
});
[
  'M35 405L48 392 64 379 96 353 253 216 272 203 288 193 304 183 320 174 336 167 352 163 368 158 384 152 400 147 416 142 432 137 448 130 464 123 480 118 496 115 512 111 528 110 544 108 560 106',
  'M230 405L240 378 261 349 272 337 283 324 288 317 304 284 320 273 336 265 352 260 368 256 384 243 400 233 416 217 432 209 448 191 464 171 480 152 496 149 512 153 528 152 544 149 560 150',
  'M340 70L352 63 368 62 384 63 400 62 415 66 424 65 435 65 460 75 485 83 496 80 512 70 528 68 544 65 560 63'
].forEach(function (d) { add(cs, 'path', { d: d, fill: 'none', stroke: '#3cb371' }); });
[
  [2915.25, 2915, 2912.75, 2912.25, 1], [2913.25, 2912.75, 2912.5, 2912.25, 1], [2914, 2913.25, 2912.5, 2911.75, 0],
  [2913.75, 2913.5, 2912.25, 2911.25, 1], [2914.5, 2913.75, 2912.25, 2912.25, 0], [2915.25, 2914.5, 2913.5, 2913, 0],
  [2916.25, 2914.75, 2914.5, 2912.25, 0], [2914.75, 2914.25, 2912.25, 2912.25, 1], [2914.25, 2913.75, 2912.25, 2911.75, 0],
  [2914.25, 2913.75, 2913.5, 2912.25, 1], [2914, 2913.25, 2913, 2912.25, 1], [2914.75, 2914, 2913.25, 2913, 0],
  [2917, 2916.25, 2914, 2913.75, 0], [2918.5, 2917, 2916.25, 2916.25, 0], [2917.25, 2917, 2914.5, 2914.5, 1],
  [2917.5, 2917, 2914.75, 2914.25, 0], [2919, 2918.5, 2917.25, 2916.5, 0], [2922.5, 2918.5, 2915.5, 2915, 1],
  [2916.75, 2916.75, 2915.5, 2914.75, 0], [2918, 2917.25, 2916.75, 2916.25, 0]
].forEach(function (k, i) {
  var x = cx(i + 15);
  add(cs, 'path', { d: 'M' + (x + .5) + ' ' + py(k[0]) + 'V' + py(k[3]), stroke: '#0f0' });
  add(cs, 'rect', { x: x - 4.5, y: py(k[1]) + .5, width: 10, height: py(k[2]) - py(k[1]), fill: k[4] ? '#fff' : '#000', stroke: '#0f0' });
});
add(cs, 'path', { d: 'M484 74.5H697', stroke: '#00c000' });
add(cs, 'path', { d: 'M484 77.5H697', stroke: '#ff0' });
add(cs, 'rect', { x: 692.5, y: 75.5, width: 4, height: 4, fill: '#fff', stroke: '#ff0' });
add(cs, 'path', { d: 'M556 0h9l-4.500 5z', fill: '#708090' });
add(cs, 'path', { d: 'M496.5 86V104M512.5 53V78M544.5 92L560 66', stroke: '#1464c8', 'stroke-dasharray': '4 3', fill: 'none' });
function mark(x, y, down) {
  add(cs, 'path', { d: down ? 'M-2-4H2V-1H4L0 4L-4-1H-2z' : 'M-2 4H2V1H4L0-4L-4 1H-2z', transform: 'translate(' + x + ' ' + y + ')', fill: down ? '#e8461e' : '#0a5cb4', stroke: '#fff', 'stroke-width': 1 });
}
mark(496.5, 85, true); mark(512.5, 52, true); mark(560.5, 64, true);
mark(496.5, 107, false); mark(512.5, 80, false); mark(544.5, 95, false);

/* closed positions */
var deals = [
  ['5377...', 'sell', '2904.75', '2906.50', '2903.25', '01:', '2903.75', '5.00', ''],
  ['5377...', 'buy', '2903.75', '2904.00', '2905.25', '01:', '2905.25', '7.50', 'tp'],
  ['5377...', 'sell', '2905.25', '2907.00', '2903.75', '01:', '2903.75', '7.50', 'tp'],
  ['5377...', 'buy', '2904.50', '2905.00', '2906.75', '02:', '2905.00', '2.50', 'sl'],
  ['5378...', 'buy', '2905.50', '2903.75', '2907.00', '02:', '2907.00', '7.50', 'tp'],
  ['5379...', 'buy', '2915.00', '2913.00', '2916.25', '05:', '2916.00', '5.00', 'tp'],
  ['5379...', 'buy', '2917.25', '2915.50', '2918.75', '05:', '2918.75', '7.50', 'tp'],
  ['5379...', 'buy', '2916.00', '2916.25', '2917.75', '06:', '2917.75', '8.75', 'tp']
];
document.getElementById('deals').innerHTML = deals.map(function (d) {
  var s = d[1] === 'sell', line = s ? '#e8501e' : '#1878b8', bg = s ? '#ffe0d4' : '#d8ecff';
  var icon = '<svg class="doc" width="12" height="16"><path d="M.500 .500h11v11l-4 4h-7z" fill="' + bg + '" stroke="' + line + '"/><path d="M3 4h6M3 7h6M3 10h4" stroke="' + line + '"/><path d="M7 16v-5h5z" fill="' + line + '"/></svg>';
  return '<tr><td>' + icon + '2020.05.08...</td><td>' + d[0] + '</td><td>' + d[1] + '</td><td>1.00</td><td>mes...</td><td>' + d[2] +
    '</td><td' + (d[8] === 'sl' ? ' class="bad"' : '') + '>' + d[3] + '</td><td' + (d[8] === 'tp' ? ' class="good"' : '') + '>' + d[4] +
    '</td><td>2020.05.08 ' + d[5] + '...</td><td>' + d[6] + '</td><td>0.00</td><td>' + d[7] + '</td></tr>';
}).join('');
```
